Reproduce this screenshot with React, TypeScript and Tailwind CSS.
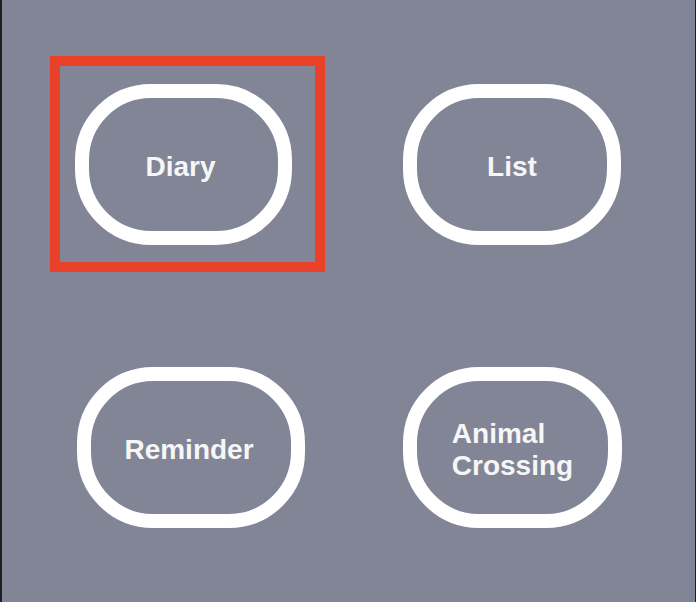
import React from 'react'

const font = { fontFamily: '"Liberation Sans", Arial, Helvetica, sans-serif' }

function Pill({ label, className }: { label: React.ReactNode; className: string }) {
  return (
    <button
      className={`h-[161px] rounded-[76px] border-[14px] border-white flex items-center justify-center pt-[5px] text-[28px] font-bold text-[#f6f6f6] leading-[32px] ${className}`}
    >
      {label}
    </button>
  )
}

export default function App() {
  return (
    <div
      className="w-[696px] h-[602px] bg-[#828596] border-l-[2px] border-r-[1px] border-[#1d1d22] overflow-hidden"
      style={font}
    >
      {/* top row */}
      <div className="flex pt-[84px]">
        <div className="relative ml-[73px]">
          <Pill label="Diary" className="w-[217px] pr-[6px]" />
          <div className="absolute left-[-25px] top-[-28px] w-[275px] h-[216px] border-[10px] border-[#e9412a] pointer-events-none" />
        </div>
        <Pill label="List" className="ml-[111px] w-[218px]" />
      </div>

      {/* bottom row */}
      <div className="flex mt-[122px]">
        <Pill label="Reminder" className="ml-[75px] w-[228px] pr-[4px]" />
        <Pill
          label={
            <span className="text-left block">
              Animal
              <br />
              Crossing
            </span>
          }
          className="ml-[98px] w-[219px]"
        />
      </div>
    </div>
  )
}
